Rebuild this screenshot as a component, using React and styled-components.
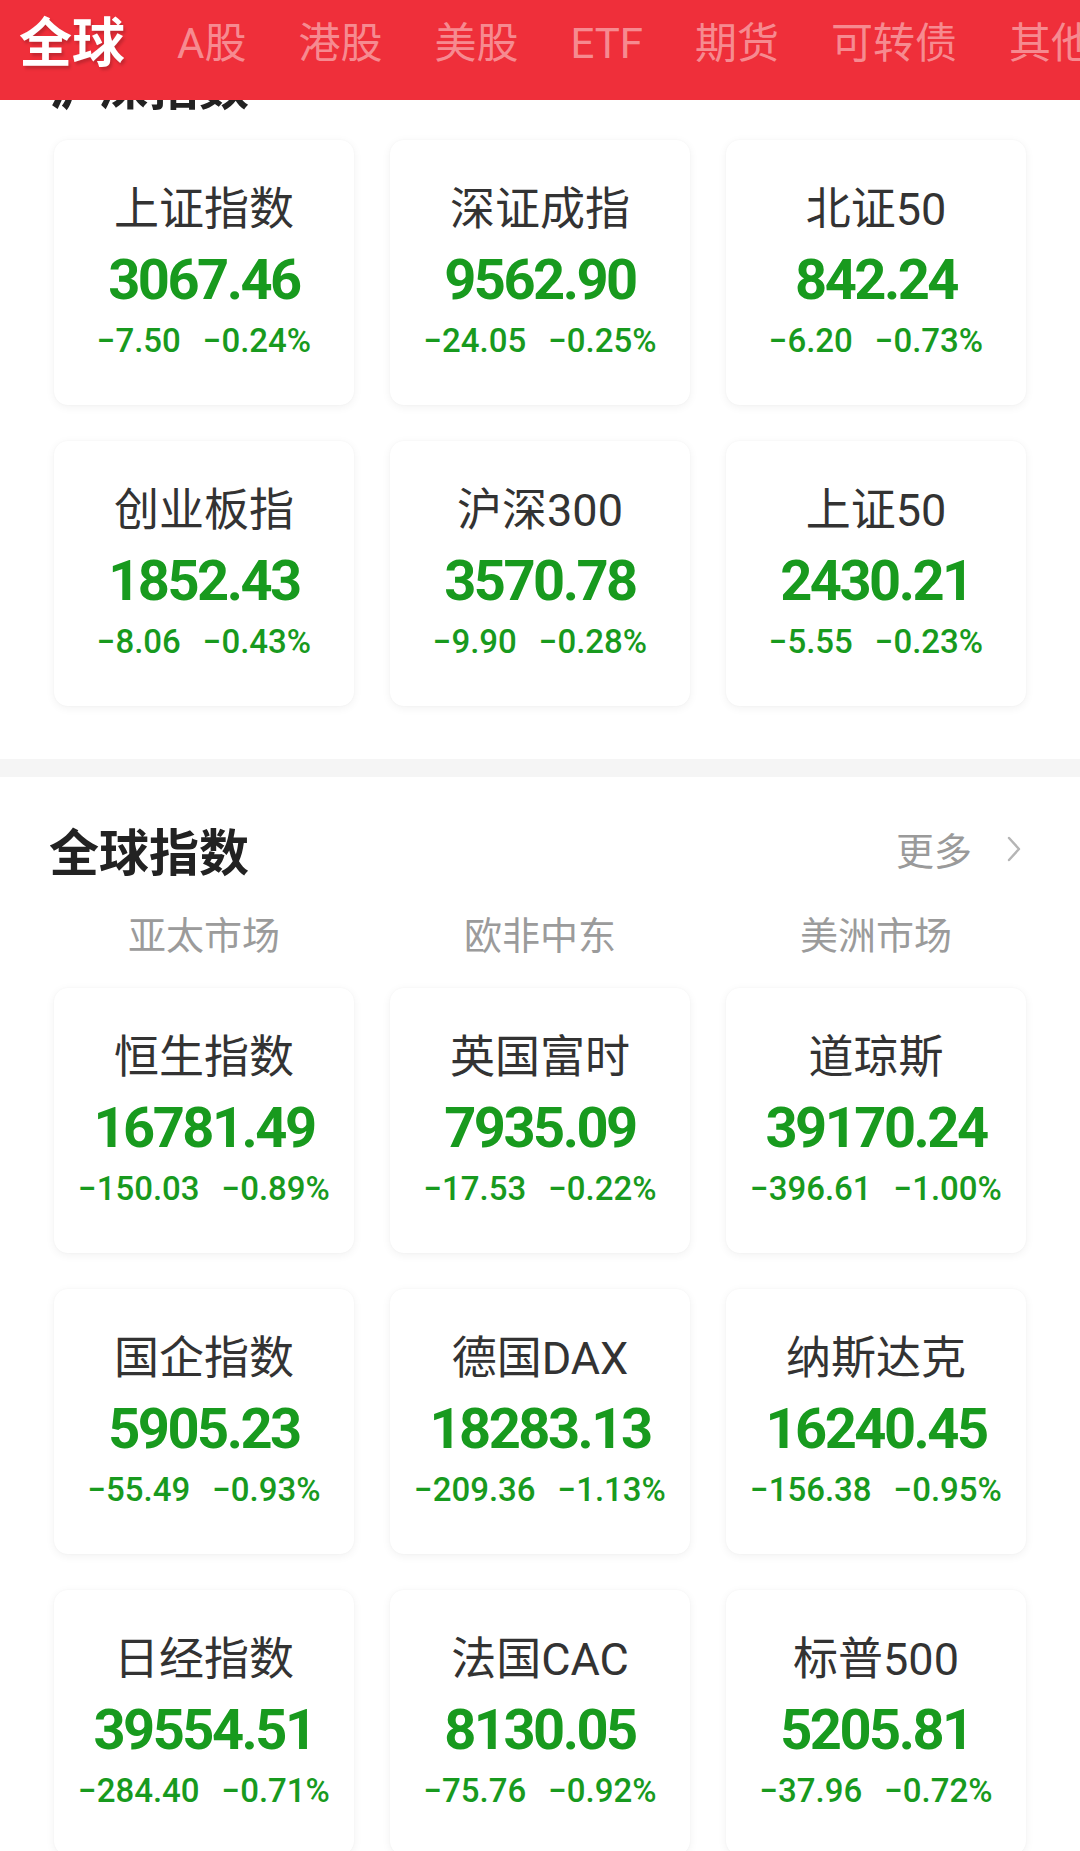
import React from "react";
import styled, { createGlobalStyle } from "styled-components";

const GlobalStyle = createGlobalStyle`
  html, body {
    margin: 0;
    padding: 0;
    background: #ffffff;
  }
  body {
    font-family: "Roboto", "Noto Sans CJK SC", sans-serif;
    -webkit-font-smoothing: antialiased;
  }
  * { box-sizing: border-box; }
`;

const Page = styled.div`
  position: relative;
  width: 1080px;
  height: 1851px;
  overflow: hidden;
  background: #ffffff;
`;

const Header = styled.div`
  position: absolute;
  top: 0;
  left: 0;
  right: 0;
  height: 100px;
  padding: 0 0 12px 19px;
  background: #ef2f3a;
  display: flex;
  align-items: center;
  gap: 52px;
  white-space: nowrap;
  overflow: hidden;
  z-index: 10;
`;

const Tab = styled.div`
  flex: none;
  font-family: "Roboto", "Noto Sans CJK SC", sans-serif;
  font-size: ${(p) => (p.$active ? "53px" : "42px")};
  font-weight: ${(p) => (p.$active ? 700 : 400)};
  line-height: 60px;
  color: ${(p) => (p.$active ? "#ffffff" : "rgba(255,255,255,0.45)")};
  text-shadow: ${(p) => (p.$active ? "2px 3px 3px rgba(0,0,0,0.18)" : "none")};
`;

const Section = styled.section`
  padding: ${(p) => p.$pad};
`;

const SectionHeader = styled.div`
  height: 60px;
  padding: 0 58px 0 49px;
  display: flex;
  align-items: center;
  justify-content: space-between;
`;

const SectionTitle = styled.h2`
  margin: 0;
  font-family: "Noto Sans CJK SC", sans-serif;
  font-size: 50px;
  font-weight: 700;
  line-height: 60px;
  color: #222222;
`;

const More = styled.div`
  display: flex;
  align-items: center;
  gap: 34px;
  font-family: "Noto Sans CJK SC", sans-serif;
  font-size: 38px;
  line-height: 60px;
  color: #9a9a9a;
`;

const Divider = styled.div`
  height: 18px;
  background: #f5f5f5;
`;

const SubTabs = styled.div`
  margin-top: 30px;
  padding: 0 54px;
  display: grid;
  grid-template-columns: repeat(3, 300px);
  column-gap: 36px;
`;

const SubTab = styled.div`
  text-align: center;
  font-family: "Noto Sans CJK SC", sans-serif;
  font-size: 38px;
  line-height: 48px;
  color: #9b9b9b;
`;

const Grid = styled.div`
  margin-top: ${(p) => p.$top}px;
  padding: 0 54px;
  display: grid;
  grid-template-columns: repeat(3, 300px);
  column-gap: 36px;
  row-gap: 36px;
`;

const Card = styled.div`
  height: 265px;
  padding-top: 42px;
  border-radius: 14px;
  background: #ffffff;
  box-shadow: 0 2px 10px rgba(0, 0, 0, 0.06), 0 0 2px rgba(0, 0, 0, 0.04);
  display: flex;
  flex-direction: column;
  align-items: center;
`;

const Name = styled.div`
  height: 56px;
  font-family: "Roboto", "Noto Sans CJK SC", sans-serif;
  font-size: 45px;
  line-height: 56px;
  color: #333333;
  white-space: nowrap;
`;

const Value = styled.div`
  margin-top: 10px;
  height: 64px;
  font-family: "Roboto", sans-serif;
  font-size: 56px;
  font-weight: 700;
  letter-spacing: -2.5px;
  line-height: 64px;
  color: #189a1e;
  white-space: nowrap;
`;

const Change = styled.div`
  margin-top: 7px;
  height: 44px;
  display: flex;
  gap: 22px;
  font-family: "Roboto", sans-serif;
  font-size: 33px;
  font-weight: 500;
  letter-spacing: 0;
  line-height: 44px;
  color: #189a1e;
  white-space: nowrap;
`;

const Chevron = () => (
  <svg width="16" height="26" viewBox="0 0 16 26" fill="none">
    <path d="M3 2 L13 13 L3 24" stroke="#b5b5b5" strokeWidth="2.4" strokeLinecap="round" strokeLinejoin="round" />
  </svg>
);

const tabs = ["全球", "A股", "港股", "美股", "ETF", "期货", "可转债", "其他"];

const domestic = [
  ["上证指数", "3067.46", "−7.50", "−0.24%"],
  ["深证成指", "9562.90", "−24.05", "−0.25%"],
  ["北证50", "842.24", "−6.20", "−0.73%"],
  ["创业板指", "1852.43", "−8.06", "−0.43%"],
  ["沪深300", "3570.78", "−9.90", "−0.28%"],
  ["上证50", "2430.21", "−5.55", "−0.23%"],
];

const global = [
  ["恒生指数", "16781.49", "−150.03", "−0.89%"],
  ["英国富时", "7935.09", "−17.53", "−0.22%"],
  ["道琼斯", "39170.24", "−396.61", "−1.00%"],
  ["国企指数", "5905.23", "−55.49", "−0.93%"],
  ["德国DAX", "18283.13", "−209.36", "−1.13%"],
  ["纳斯达克", "16240.45", "−156.38", "−0.95%"],
  ["日经指数", "39554.51", "−284.40", "−0.71%"],
  ["法国CAC", "8130.05", "−75.76", "−0.92%"],
  ["标普500", "5205.81", "−37.96", "−0.72%"],
];

const IndexCard = ({ item }) => (
  <Card>
    <Name>{item[0]}</Name>
    <Value>{item[1]}</Value>
    <Change>
      <span>{item[2]}</span>
      <span>{item[3]}</span>
    </Change>
  </Card>
);

export default function App() {
  return (
    <>
      <GlobalStyle />
      <Page>
        <Header>
          {tabs.map((t, i) => (
            <Tab key={t} $active={i === 0}>
              {t}
            </Tab>
          ))}
        </Header>

        <Section $pad="53px 0 53px">
          <SectionHeader>
            <SectionTitle>沪深指数</SectionTitle>
          </SectionHeader>
          <Grid $top={27}>
            {domestic.map((d) => (
              <IndexCard key={d[0]} item={d} />
            ))}
          </Grid>
        </Section>

        <Divider />

        <Section $pad="42px 0 0">
          <SectionHeader>
            <SectionTitle>全球指数</SectionTitle>
            <More>
              <span>更多</span>
              <Chevron />
            </More>
          </SectionHeader>
          <SubTabs>
            <SubTab>亚太市场</SubTab>
            <SubTab>欧非中东</SubTab>
            <SubTab>美洲市场</SubTab>
          </SubTabs>
          <Grid $top={31}>
            {global.map((d) => (
              <IndexCard key={d[0]} item={d} />
            ))}
          </Grid>
        </Section>
      </Page>
    </>
  );
}
